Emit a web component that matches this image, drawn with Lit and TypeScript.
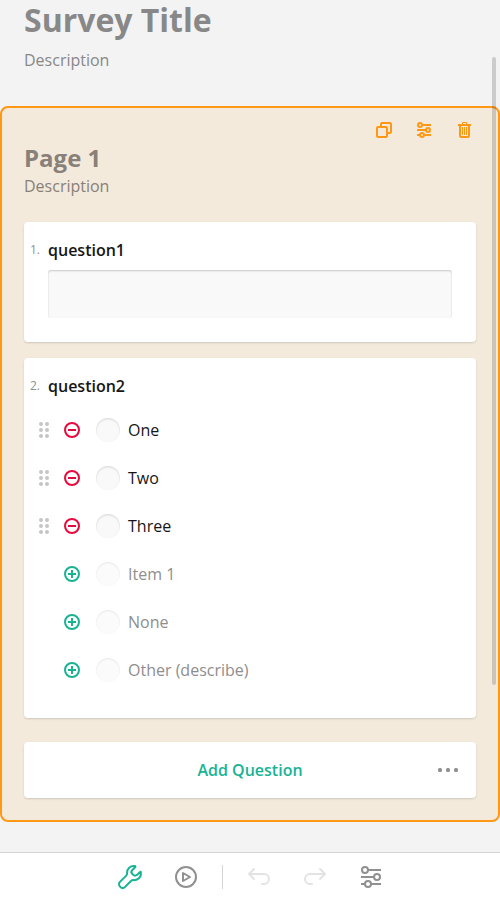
import { LitElement, html, css, svg } from "lit";
import { customElement, property } from "lit/decorators.js";

const icons: Record<string, unknown> = {
  copy: svg`<path d="M5 5V2Q5 1 6 1H14Q15 1 15 2V10Q15 11 14 11H11"/><rect x="1" y="5" width="10" height="10" rx="1"/>`,
  options: svg`<g><circle cx="4" cy="3" r="2"/><circle cx="12" cy="8" r="2"/><circle cx="6" cy="13" r="2"/><path d="M6 3H15M1 8H10M1 13H4M8 13H15"/></g>`,
  trash: svg`<path d="M2 3H15"/><path stroke-width="1" d="M6.500 2V.5H10.500V2"/><path d="M4 4V14Q4 15 5 15H12Q13 15 13 14V4"/><path stroke-width="1" d="M6.500 5V13M8.500 5V13M10.500 5V13"/>`,
  remove: svg`<circle cx="8" cy="8" r="7"/><path d="M4 8H12"/>`,
  add: svg`<circle cx="8" cy="8" r="7"/><path d="M4 8H12M8 4V12"/>`,
  wrench: svg`<path stroke-linejoin="round" d="M16.800 1.100C12.300 .6 8.800 3.700 9.100 8C9.200 9.300 8.900 10 8 10.900L1.900 16.900C.7 18.100 .7 20.200 1.900 21.400L2.500 22.100C3.700 23.300 5.600 23.300 6.800 22.100L12.700 16.200C13.600 15.400 14.400 15 15.500 15.100C20.200 15.500 23.600 11.700 22.900 7.100C22.800 6.700 22.400 6.600 22.100 6.900L18.900 9.900C17.900 10.900 16.300 10.900 15.300 9.900L14.200 8.800C13.200 7.800 13.200 6.200 14.200 5.200L17.300 2C17.600 1.600 17.400 1.200 16.800 1.100Z"/>`,
  play: svg`<circle cx="12" cy="12" r="10"/><path stroke-linejoin="round" d="M9 8V16L16 12Z"/>`,
  undo: svg`<path stroke-linejoin="round" stroke-linecap="round" d="M7 4L2 9L7 14M2.500 9H17A4.500 4.500 0 0 1 17 19H15"/>`,
  redo: svg`<path stroke-linejoin="round" stroke-linecap="round" d="M17 4L22 9L17 14M21.500 9H7A4.500 4.500 0 0 0 7 19H9"/>`,
  settings: svg`<circle cx="6" cy="5" r="3"/><circle cx="18" cy="12" r="3"/><circle cx="9" cy="19" r="3"/><path d="M9 5H22M2 12H15M2 19H6M12 19H22"/>`,
};

@customElement("ui-icon")
class UiIcon extends LitElement {
  @property() name = "";
  @property({ type: Number }) size = 16;
  static styles = css`
    :host { display: block; flex: none; }
    svg { display: block; fill: none; stroke: currentColor; stroke-width: 2; overflow: visible; }
  `;
  render() {
    return html`<svg width=${this.size} height=${this.size} viewBox="0 0 ${this.size} ${this.size}">${icons[this.name]}</svg>`;
  }
}

@customElement("choice-row")
class ChoiceRow extends LitElement {
  @property() label = "";
  @property({ type: Boolean, reflect: true }) ghost = false;
  static styles = css`
    :host { display: flex; align-items: center; height: 48px; padding-left: 15px; color: #161616; }
    .drag { display: grid; grid-template-columns: 4px 4px; gap: 2px; width: 10px; margin-right: 15px; }
    .drag i { width: 4px; height: 4px; border-radius: 50%; background: #c6c6c6; }
    :host([ghost]) .drag { visibility: hidden; }
    ui-icon { color: #e60a3e; }
    :host([ghost]) ui-icon { color: #19b394; }
    .radio { width: 24px; height: 24px; border-radius: 50%; margin: 0 8px 0 16px; background: #f9f9f9; box-shadow: inset 0 1px 2px rgba(0, 0, 0, .15); }
    .text { line-height: 24px; }
    :host([ghost]) .radio { opacity: .5; }
    :host([ghost]) .text { color: #8e8e8e; }
  `;
  render() {
    return html`
      <div class="drag">${[0, 1, 2, 3, 4, 5].map(() => html`<i></i>`)}</div>
      <ui-icon name=${this.ghost ? "add" : "remove"}></ui-icon>
      <span class="radio"></span><span class="text">${this.label}</span>`;
  }
}

@customElement("app-root")
class AppRoot extends LitElement {
  static styles = css`
    :host {
      display: flex; flex-direction: column; position: relative; box-sizing: border-box;
      width: 500px; height: 900px; overflow: hidden; background: #f3f3f3;
      font: 400 16px/24px "Open Sans", sans-serif; color: #161616;
    }
    .canvas { flex: 1; min-height: 0; }
    .header { height: 107px; box-sizing: border-box; padding: 0 24px; color: #888; }
    h1 { margin: 0; font-size: 32px; line-height: 40px; font-weight: 700; }
    .header p { margin: 8px 0 0; }
    .page { box-sizing: border-box; height: 716px; margin-top: -1px; padding: 14px 22px 22px; border: 2px solid #ff9814; border-radius: 8px; background: #f3eadc; }
    .actions { display: flex; justify-content: flex-end; gap: 24px; padding-right: 4px; height: 16px; color: #ff9814; }
    h2 { margin: 4px 0 0; font-size: 24px; line-height: 32px; font-weight: 700; color: #888079; }
    .page p { margin: 0; color: #888079; }
    .card { box-sizing: border-box; background: #fff; border-radius: 4px; box-shadow: 0 1px 2px rgba(0, 0, 0, .15); }
    .q1 { height: 120px; margin-top: 24px; padding: 16px 24px 24px 0; }
    .q2 { height: 360px; margin-top: 16px; padding-top: 16px; }
    .title { display: flex; align-items: center; height: 24px; font-weight: 600; }
    .num { width: 16px; margin-right: 8px; text-align: right; font-size: 12px; font-weight: 400; color: #909090; }
    .input { height: 48px; margin: 8px 0 0 24px; border-radius: 3px; background: #f9f9f9; box-shadow: inset 0 1px 2px rgba(0, 0, 0, .2); }
    .choices { margin-top: 8px; }
    .add { display: grid; grid-template-columns: 1fr auto 1fr; align-items: center; height: 56px; margin-top: 24px; padding: 0 18px; color: #19b394; font-weight: 600; }
    .label { grid-column: 2; }
    .more { display: flex; justify-content: flex-end; gap: 4px; }
    .more i { width: 4px; height: 4px; border-radius: 1.5px; background: #909090; }
    .toolbar { box-sizing: border-box; height: 48px; border-top: 1px solid #d4d4d4; background: #fff; display: flex; align-items: center; justify-content: center; color: #909090; }
    .tool { margin: 0 16px; }
    .on { color: #19b394; }
    .off { color: #e3e3e3; }
    .sep { width: 1px; height: 24px; background: #d4d4d4; margin: 0 8px; }
    .thumb { position: absolute; left: 492px; top: 57px; width: 4px; height: 628px; border-radius: 2px; background: rgba(0, 0, 0, .16); }
  `;
  render() {
    return html`
      <div class="canvas">
        <div class="header"><h1>Survey Title</h1><p>Description</p></div>
        <div class="page">
          <div class="actions"><ui-icon name="copy"></ui-icon><ui-icon name="options"></ui-icon><ui-icon name="trash"></ui-icon></div>
          <h2>Page 1</h2>
          <p>Description</p>
          <div class="card q1">
            <div class="title"><span class="num">1.</span>question1</div>
            <div class="input"></div>
          </div>
          <div class="card q2">
            <div class="title"><span class="num">2.</span>question2</div>
            <div class="choices">
              ${["One", "Two", "Three"].map((t) => html`<choice-row label=${t}></choice-row>`)}
              ${["Item 1", "None", "Other (describe)"].map((t) => html`<choice-row ghost label=${t}></choice-row>`)}
            </div>
          </div>
          <div class="card add"><span class="label">Add Question</span><span class="more"><i></i><i></i><i></i></span></div>
        </div>
      </div>
      <div class="toolbar">
        <ui-icon class="tool on" name="wrench" size="24"></ui-icon>
        <ui-icon class="tool" name="play" size="24"></ui-icon>
        <span class="sep"></span>
        <ui-icon class="tool off" name="undo" size="24"></ui-icon>
        <ui-icon class="tool off" name="redo" size="24"></ui-icon>
        <ui-icon class="tool" name="settings" size="24"></ui-icon>
      </div>
      <div class="thumb"></div>`;
  }
}
